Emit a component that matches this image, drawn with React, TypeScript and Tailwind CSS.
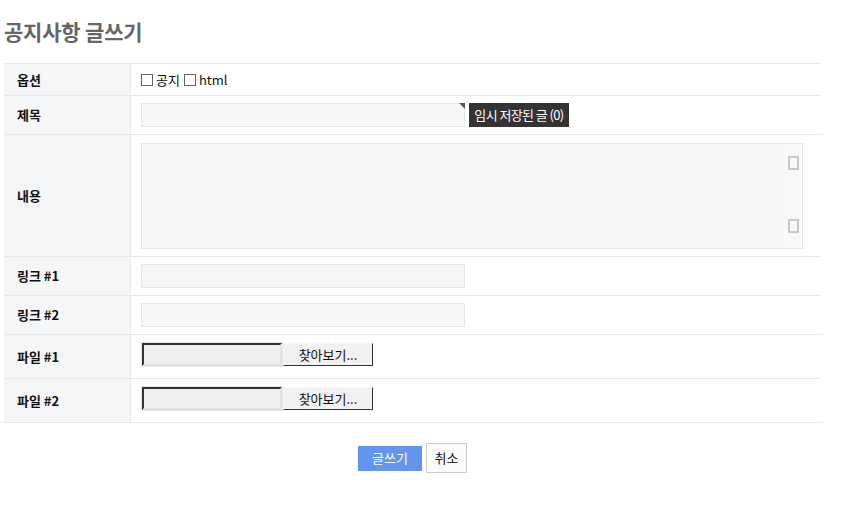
import React from 'react';

const font = { fontFamily: '"Noto Sans CJK KR", "Noto Sans", sans-serif' };

function Label({ children }: { children: React.ReactNode }) {
  return (
    <div className="w-[127px] shrink-0 bg-[#f4f6f7] border-r border-[#e6e8e8] flex items-center pl-[13px] text-[13px] font-bold text-[#111]">
      {children}
    </div>
  );
}

function Row({ label, h, top, children }: { label: string; h: string; top?: boolean; children: React.ReactNode }) {
  return (
    <div className={`flex border-b border-[#e6e8e8] ${h}`}>
      <Label>{label}</Label>
      <div className={top ? 'flex-1 flex items-start pt-[8px] pl-[10px]' : 'flex-1 flex items-center pl-[10px]'}>{children}</div>
    </div>
  );
}

function TextBox() {
  return <div className="w-[324px] h-[24px] bg-[#f6f6f6] border border-[#e3e6e6]" />;
}

function FileInput() {
  return (
    <div className="flex items-center gap-[1px] pl-[1px]">
      <div className="w-[140px] h-[23px] bg-[#efefef] border-t-2 border-l-2 border-t-[#333] border-l-[#333] border-b-2 border-r-2 border-b-[#e3e3e3] border-r-[#e3e3e3] outline outline-1 outline-[#e3e3e3]" />
      <button className="w-[90px] h-[23px] bg-[#f1f1f1] border border-t-[#f8f8f8] border-l-[#f8f8f8] border-r-[#333] border-b-[#333] text-[13px] text-[#111] leading-none">
        찾아보기...
      </button>
    </div>
  );
}

function Check({ label }: { label: string }) {
  return (
    <label className="flex items-center gap-[3px] mr-[4px]">
      <span className="inline-block w-[12px] h-[12px] border border-[#666] bg-white" />
      <span className="text-[13px] text-[#111]">{label}</span>
    </label>
  );
}

export default function App() {
  return (
    <div className="w-[850px] h-[510px] bg-white pl-[4px] pr-[29px]" style={font}>
      <h1 className="pt-[16px] h-[63px] text-[21px] font-bold text-[#666] tracking-[-0.2px]">공지사항 글쓰기</h1>

      <div className="border-t border-[#e6e8e8]">
        <Row label="옵션" h="h-[32px]">
          <div className="flex items-center pt-[1px]">
            <Check label="공지" />
            <Check label="html" />
          </div>
        </Row>
        <Row label="제목" h="h-[39px]">
          <div className="flex items-center gap-[4px]">
            <div className="relative">
              <TextBox />
              <span className="absolute top-0 right-0 w-0 h-0 border-l-[6px] border-l-transparent border-t-[6px] border-t-[#555]" />
            </div>
            <span className="w-[100px] h-[24px] bg-[#333] text-white text-[13px] tracking-[-0.6px] flex items-center justify-center">임시 저장된 글 (0)</span>
          </div>
        </Row>
        <Row label="내용" h="h-[122px]">
          <div className="w-[662px] h-[106px] bg-[#f6f6f6] border border-[#e3e6e6] flex">
            <div className="flex-1" />
            <div className="w-[18px] bg-[#f8f8f8] flex flex-col items-center pt-[12px] gap-[49px]">
              <span className="w-[11px] h-[14px] border-2 border-[#c8c8c8]" />
              <span className="w-[11px] h-[14px] border-2 border-[#c8c8c8]" />
            </div>
          </div>
        </Row>
        <Row label="링크 #1" h="h-[39px]">
          <TextBox />
        </Row>
        <Row label="링크 #2" h="h-[39px]">
          <TextBox />
        </Row>
        <Row label="파일 #1" h="h-[44px]" top>
          <FileInput />
        </Row>
        <Row label="파일 #2" h="h-[44px]" top>
          <FileInput />
        </Row>
      </div>

      <div className="flex justify-center items-center gap-[4px] mt-[20px]">
        <button className="w-[64px] h-[25px] bg-[#6495ed] text-white text-[13px]">글쓰기</button>
        <button className="w-[41px] h-[30px] bg-[#fafafa] border border-[#ccc] text-[13px] text-[#111]">취소</button>
      </div>
    </div>
  );
}
